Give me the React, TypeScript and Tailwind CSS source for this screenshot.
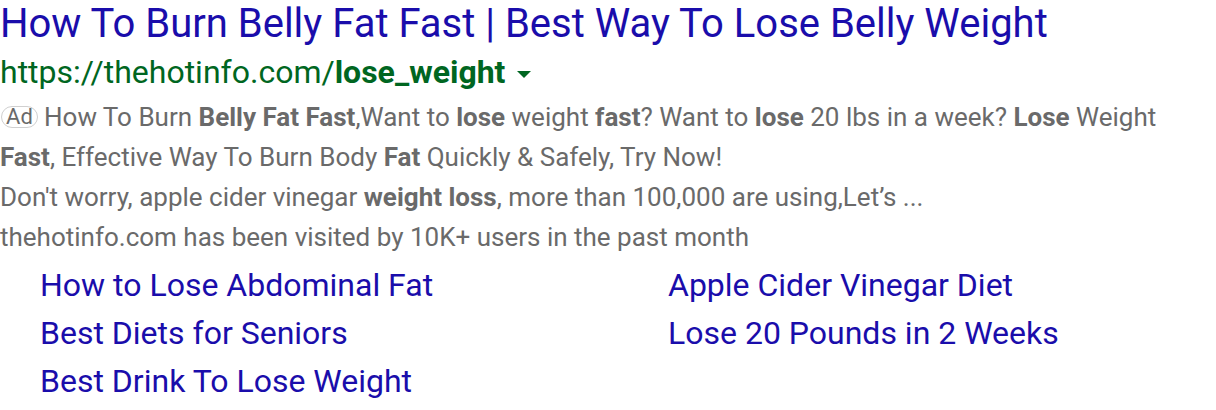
import React from "react";

const B = ({ children }: { children: React.ReactNode }) => (
  <b className="font-bold text-[#6a6a6a]">{children}</b>
);

export default function App() {
  const left = ["How to Lose Abdominal Fat", "Best Diets for Seniors", "Best Drink To Lose Weight"];
  const right = ["Apple Cider Vinegar Diet", "Lose 20 Pounds in 2 Weeks"];
  return (
    <div className="w-[1216px] h-[410px] bg-white overflow-hidden font-['Roboto',sans-serif]">
      <div className="text-[40px] leading-[48px] text-[#1a0dab] whitespace-nowrap">
        How To Burn Belly Fat Fast | Best Way To Lose Belly Weight
      </div>
      <div className="flex items-center text-[32px] leading-[49px] text-[#006621] whitespace-nowrap">
        <span>https://thehotinfo.com/<b className="font-bold">lose_weight</b></span>
        <span className="ml-[12px] mt-[4px] w-0 h-0 border-l-[7px] border-r-[7px] border-t-[7px] border-l-transparent border-r-transparent border-t-[#006621]" />
      </div>
      <div className="text-[26px] leading-[40px] text-[#6a6a6a]">
        <div className="whitespace-nowrap">
          <span className="inline-flex items-center justify-center align-[2px] border border-[#d0d0d0] rounded-full w-[37px] h-[22px] text-[22px] leading-none ml-[1px] mr-[6px]">Ad</span>
          How To Burn <B>Belly Fat Fast</B>,Want to <B>lose</B> weight <B>fast</B>? Want to <B>lose</B> 20 lbs in a week? <B>Lose</B> Weight
        </div>
        <div className="whitespace-nowrap"><B>Fast</B>, Effective Way To Burn Body <B>Fat</B> Quickly &amp; Safely, Try Now!</div>
        <div className="whitespace-nowrap">Don't worry, apple cider vinegar <B>weight loss</B>, more than 100,000 are using,Let’s ...</div>
        <div className="whitespace-nowrap">thehotinfo.com has been visited by 10K+ users in the past month</div>
      </div>
      <div className="flex pl-[40px] text-[32px] leading-[48px] text-[#1a0dab] mt-[4px]">
        <div className="w-[628px] flex flex-col">
          {left.map((t) => <div key={t} className="whitespace-nowrap">{t}</div>)}
        </div>
        <div className="flex flex-col">
          {right.map((t) => <div key={t} className="whitespace-nowrap">{t}</div>)}
        </div>
      </div>
    </div>
  );
}
